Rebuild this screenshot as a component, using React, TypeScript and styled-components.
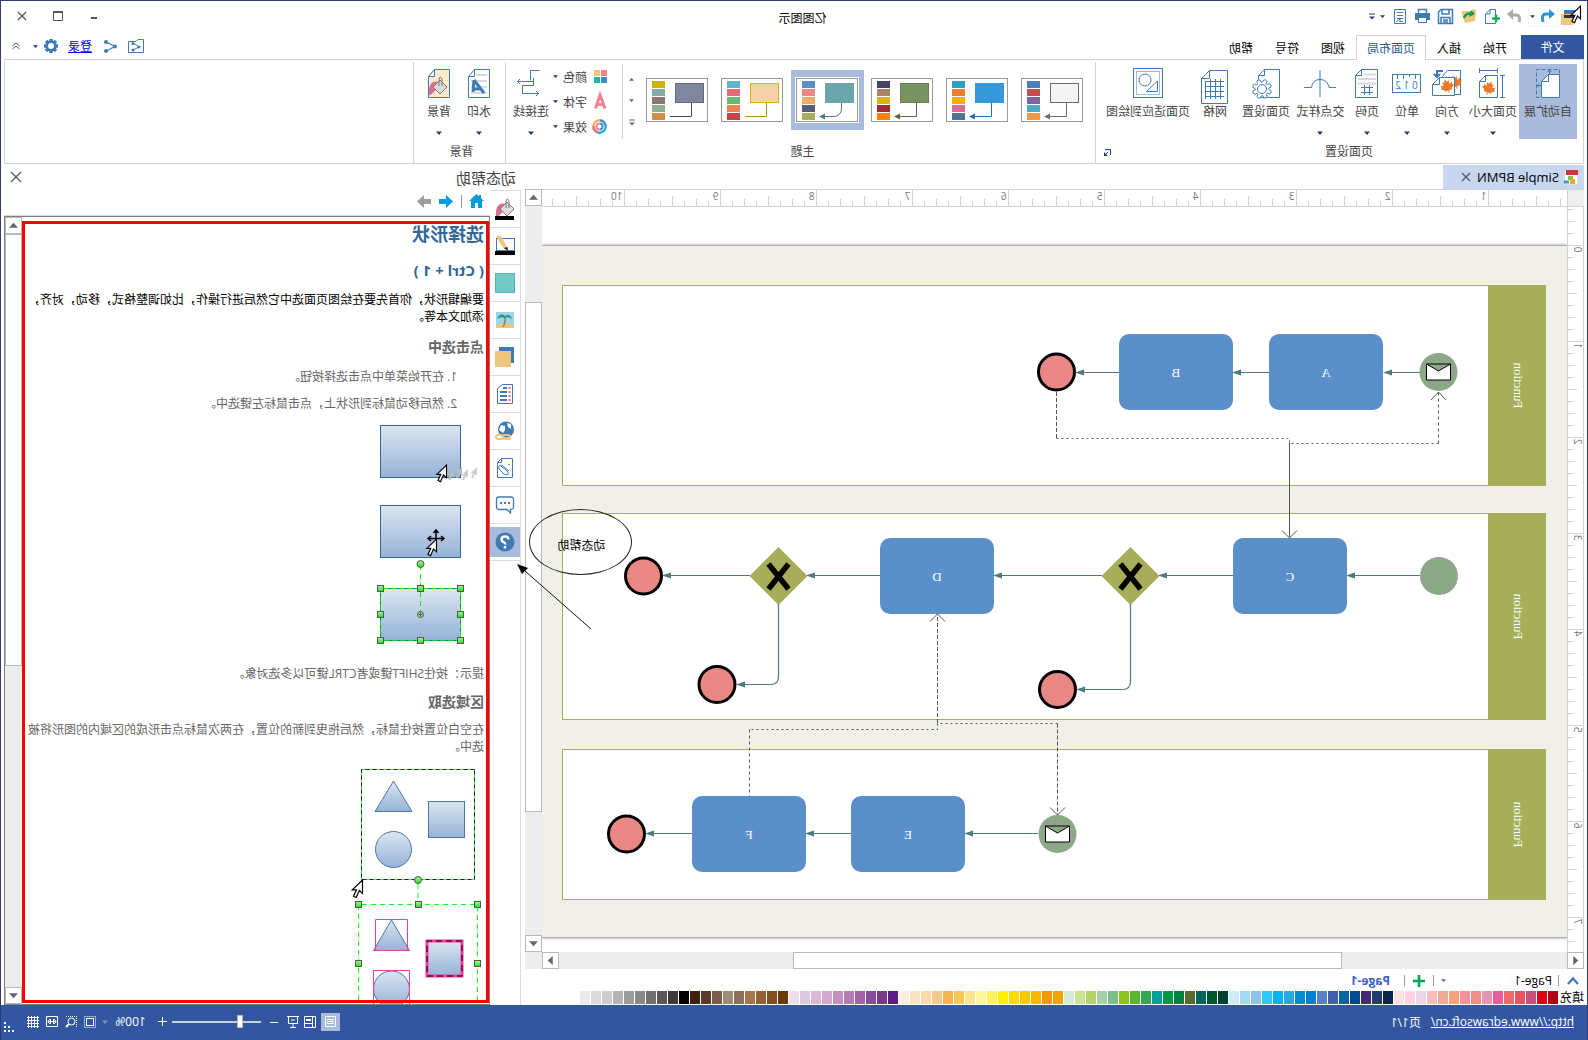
import React, { useState } from "react";
import styled, { createGlobalStyle } from "styled-components";

const BLUE = "#3f7ab5";
const NAVY = "#27407a";
const BAR = "#3257a0";
const HIGHLIGHT = "#a9bbdc";
const LINE = "#d2d2d2";
const OLIVE = "#a8ad5a";
const LINK = "#4d7a7e";
const SANS = '"Open Sans", "Noto Sans CJK SC", sans-serif';
const SERIF = '"Liberation Serif", "Noto Sans CJK SC", serif';

const GlobalStyle = createGlobalStyle`
  *, *::before, *::after { box-sizing: border-box; }
  body { margin: 0; background: #fff; font-family: ${SANS}; font-size: 12px; color: #444; overflow: hidden; }
  button, select, input { font: inherit; color: inherit; margin: 0; padding: 0; border: 0; background: none; }
  h1, h2, h3, p, ol { margin: 0; padding: 0; }
  svg { display: block; flex: none; overflow: visible; }
`;

/* The whole window is shown as a mirror image. */
const Window = styled.div`
  transform: scaleX(-1);
  display: flex;
  flex-direction: column;
  height: 100vh;
  overflow: hidden;
  background: #fff;
  border: 1px solid ${NAVY};
  border-bottom: 0;
`;

const TitleBar = styled.header`
  display: grid;
  grid-template-columns: 1fr auto 1fr;
  align-items: center;
  height: 34px;
  padding: 0 9px 4px 6px;
`;
const QuickBar = styled.div`
  display: flex;
  align-items: center;
  gap: 3px;
`;
const IconButton = styled.button<{ $w?: number; $h?: number }>`
  display: flex;
  align-items: center;
  justify-content: center;
  flex: none;
  width: ${(p) => p.$w ?? 20}px;
  height: ${(p) => p.$h ?? 20}px;
`;
const RedoBox = styled.div`
  display: flex;
  border: 1px solid #f4f4f4;
  width: 30px;
`;
const WindowTitle = styled.div`
  padding: 5px 14px 0 0;
  line-height: 18px;
  color: #000;
`;
const WindowButtons = styled.div`
  display: flex;
  justify-content: flex-end;
  gap: 12px;
`;

const TabRow = styled.nav`
  display: flex;
  height: 24px;
  padding: 0 3px;
`;
const FileTab = styled.button`
  width: 63px;
  margin-right: 3px;
  background: ${BAR};
  color: #fff;
`;
const Tab = styled.button<{ $active?: boolean }>`
  padding: 0 10px;
  border: 1px solid ${(p) => (p.$active ? LINE : "transparent")};
  border-bottom: 0;
  background: #fff;
  color: ${(p) => (p.$active ? "#2b5797" : "#000")};
  height: ${(p) => (p.$active ? 25 : 24)}px;
  position: relative;
`;
const TabTools = styled.div`
  display: flex;
  align-items: center;
  gap: 10px;
  margin-left: auto;
  padding: 0 5px 2px 0;
`;
const SettingsGroup = styled.div`
  display: flex;
  align-items: center;
  gap: 5px;
`;
const Login = styled.a`
  color: #0000ff;
`;

const Ribbon = styled.section`
  display: flex;
  height: 105px;
  flex: none;
  margin: 0 3px;
  border: 1px solid ${LINE};
`;
const Group = styled.div<{ $end: number }>`
  display: flex;
  flex-direction: column;
  margin-top: 2px;
  border-right: 1px solid ${LINE};
  & > :first-child { padding: 2px ${(p) => p.$end}px 0 6px; }
`;
const GroupBody = styled.div`
  display: flex;
  height: 77px;
`;
const GroupFoot = styled.div`
  display: flex;
  align-items: center;
  line-height: 18px;
  padding: 4px 4px 0 0;
`;
const GroupName = styled.span`
  flex: 1;
  text-align: center;
`;
const Big = styled.button<{ $w: number; $on?: boolean }>`
  display: flex;
  flex-direction: column;
  align-items: center;
  width: ${(p) => p.$w}px;
  height: 75px;
  padding-top: 4px;
  white-space: nowrap;
  background: ${(p) => (p.$on ? HIGHLIGHT : "none")};
`;
const BigIcon = styled.span`
  display: block;
  height: 30px;
`;
const BigLabel = styled.span`
  margin: 5px 0 9px;
  line-height: 18px;
`;
const Gallery = styled.div`
  display: flex;
  align-items: center;
  gap: 2px;
  height: 72px;
`;
const ThemeButton = styled.button<{ $on?: boolean }>`
  display: flex;
  align-items: center;
  justify-content: center;
  width: 73px;
  height: 60px;
  background: ${(p) => (p.$on ? HIGHLIGHT : "none")};
`;
const GalleryScroll = styled.div`
  display: flex;
  flex-direction: column;
  align-items: center;
  justify-content: space-between;
  width: 19px;
  height: 75px;
  padding: 7px 0 9px;
  border-right: 1px solid ${LINE};
`;
const Stack = styled.div`
  display: flex;
  flex-direction: column;
  margin-left: 15px;
`;
const SmallButton = styled.button`
  display: flex;
  align-items: center;
  gap: 5px;
  height: 25px;
`;

const Body = styled.main`
  display: flex;
  flex: 1;
  min-height: 0;
  padding: 0 3px;
`;
const Workspace = styled.section`
  position: relative;
  display: flex;
  flex-direction: column;
  flex: 1;
  min-width: 0;
`;
const DocTabs = styled.div`
  display: flex;
  height: 25px;
  padding-top: 1px;
`;
const DocTab = styled.div`
  display: flex;
  align-items: center;
  width: 141px;
  padding-left: 6px;
  background: #c7d7f0;
  color: #000;
  font-size: 13px;
`;
const DocName = styled.span`
  padding: 0 4px;
`;
const Sheet = styled.div`
  display: grid;
  grid-template-columns: 17px 1fr 17px;
  grid-template-rows: 18px 1fr 17px;
  flex: 1;
  min-height: 0;
`;
const Corner = styled.div`
  background: #eee;
  border: solid ${LINE};
  border-width: 1px 1px 1px 0;
`;
const HRuler = styled.div`
  overflow: hidden;
  border: solid ${LINE};
  border-width: 1px 0;
`;
const VRuler = styled.div`
  overflow: hidden;
  border: solid ${LINE};
  border-width: 0 1px;
`;
const Canvas = styled.div`
  position: relative;
  display: flex;
  padding: 38px 0 14px;
  overflow: hidden;
`;
const Paper = styled.div`
  flex: 1;
  background: #f0f0e8;
  border: solid #adadad;
  border-width: 1px 0;
  box-shadow: 0 0 3px #999;
`;
const Drawing = styled.svg`
  position: absolute;
  inset: 0;
  width: 100%;
  height: 100%;
`;
const ScrollBar = styled.div<{ $row?: boolean }>`
  display: flex;
  flex-direction: ${(p) => (p.$row ? "row" : "column")};
  background: #ededed;
`;
const VScroll = styled(ScrollBar)`
  grid-column: 3;
  grid-row: 1 / 3;
`;
const HScroll = styled(ScrollBar)`
  grid-column: 1 / 3;
`;
const ScrollCorner = styled.div`
  background: #ededed;
`;
const ScrollButton = styled.button`
  display: flex;
  align-items: center;
  justify-content: center;
  flex: none;
  width: 17px;
  height: 17px;
  background: #fff;
  border: 1px solid #b9b9b9;
`;
const ScrollGap = styled.div<{ $grow: number }>`
  flex: ${(p) => p.$grow} 1 0;
`;
const ScrollThumb = styled.div<{ $grow: number }>`
  flex: ${(p) => p.$grow} 1 0;
  background: #fff;
  border: 1px solid #b9b9b9;
`;
const PageTabs = styled.div`
  display: flex;
  align-items: center;
  height: 21px;
  padding-top: 2px;
  color: #000;
`;
const PageSelect = styled.select`
  appearance: none;
  width: 108px;
  padding-left: 2px;
  line-height: 16px;
`;
const Rule = styled.i<{ $h?: number; $m?: string }>`
  width: 1px;
  height: ${(p) => p.$h ?? 11}px;
  margin: ${(p) => p.$m ?? "0"};
  background: #999;
`;
const CurrentPage = styled.button`
  color: #3c62c4;
  font-weight: 700;
`;
const FillRow = styled.div`
  display: flex;
  align-items: center;
  height: 15px;
  color: #000;
  line-height: 15px;
`;
const Swatches = styled.div`
  display: flex;
  gap: 1px;
  margin-left: 2px;
`;
const Swatch = styled.button<{ $c: string }>`
  width: 10px;
  height: 13px;
  background: ${(p) => p.$c};
`;
const Callout = styled.div`
  position: absolute;
  right: 4px;
  top: 345px;
  width: 103px;
  height: 66px;
  padding-right: 2px;
  border: 1px solid #222;
  border-radius: 50%;
  text-align: center;
  line-height: 71px;
  color: #000;
`;
const CalloutArrow = styled.svg`
  position: absolute;
  right: -8px;
  top: 400px;
`;

const Dock = styled.aside`
  display: flex;
  flex-direction: column;
  flex: none;
  width: 521px;
`;
const DockHead = styled.div`
  display: flex;
  align-items: center;
  justify-content: space-between;
  height: 26px;
  padding: 0 4px 0 9px;
  font-size: 15px;
`;
const DockBody = styled.div`
  display: flex;
  flex: 1;
  min-height: 0;
`;
const Strip = styled.div`
  width: 31px;
  margin-left: 4px;
  border-left: 1px solid #dcdcdc;
  border-top: 1px solid #dcdcdc;
`;
const StripCell = styled.div`
  display: flex;
  align-items: center;
  height: 37px;
  border-bottom: 1px solid #dcdcdc;
`;
const StripButton = styled.button<{ $on?: boolean }>`
  display: flex;
  align-items: center;
  justify-content: center;
  width: 30px;
  height: 30px;
  background: ${(p) => (p.$on ? HIGHLIGHT : "none")};
`;
const HelpPane = styled.div`
  display: flex;
  flex-direction: column;
  flex: 1;
  min-width: 0;
`;
const HelpNav = styled.div`
  display: flex;
  align-items: center;
  gap: 7px;
  height: 26px;
  padding: 0 0 3px 6px;
  border-bottom: 1px solid #dcdcdc;
`;
const HelpFrame = styled.div`
  display: flex;
  flex: 1;
  min-height: 0;
  border: 1px solid #808080;
`;
const HelpDoc = styled.article`
  position: relative;
  flex: 1;
  padding: 5px 2px 0 5px;
  overflow: hidden;
  line-height: 17px;
  color: #666;
`;
const Mark = styled.div`
  position: absolute;
  inset: 4px 0 1px 0;
  border: 3px solid #f00;
`;
const H1 = styled.h1`
  font-size: 18px;
  line-height: 24px;
  color: #336699;
`;
const H2 = styled.h2`
  margin-top: 14px;
  font-size: 15px;
  line-height: 20px;
  color: #336699;
`;
const H3 = styled.h3`
  margin-top: 10px;
  font-size: 14px;
  line-height: 20px;
`;
const Lead = styled.p`
  margin-top: 11px;
  padding-bottom: 2px;
  color: #000;
`;
const Para = styled.p`
  margin-top: 9px;
`;
const Steps = styled.ol`
  display: grid;
  gap: 10px;
  margin-top: 11px;
  padding-left: 40px;
`;

const Status = styled.footer`
  display: flex;
  align-items: center;
  height: 35px;
  flex: none;
  padding: 0 3px 2px 13px;
  background: ${BAR};
  color: #fff;
`;
const SiteLink = styled.a`
  margin-right: 10px;
  color: #fff;
`;
const StatusTools = styled.div`
  display: flex;
  align-items: center;
  gap: 5px;
  margin-left: auto;
`;
const ViewButton = styled(IconButton)<{ $on?: boolean }>`
  background: ${(p) => (p.$on ? HIGHLIGHT : "none")};
`;
const Zoom = styled.input`
  appearance: none;
  width: 89px;
  height: 14px;
  &::-webkit-slider-runnable-track { height: 2px; background: #c9cfdb; }
  &::-webkit-slider-thumb { appearance: none; width: 6px; height: 13px; margin-top: -6px; background: #fff; border: 1px solid #bbb; }
`;
const Percent = styled.span`
  width: 40px;
  padding-left: 5px;
  text-align: center;
`;
const Grip = styled.span`
  align-self: flex-end;
  margin-left: 7px;
`;

/* ---------- small glyphs ---------- */

const Caret = ({ c = "#1f3a78", s = 6, dir = "down" }: { c?: string; s?: number; dir?: "up" | "down" | "left" | "right" }) => {
  const turn = { down: 0, left: 90, up: 180, right: 270 }[dir];
  return (
    <svg width={s} height={s} viewBox="0 0 8 8">
      <path d="M0 2H8L4 6.500Z" fill={c} transform={`rotate(${turn} 4 4)`} />
    </svg>
  );
};

const Ic = ({ w, h, children, c = BLUE, sw = 1 }: { w: number; h: number; children: React.ReactNode; c?: string; sw?: number }) => (
  <svg width={w} height={h} viewBox={`0 0 ${w} ${h}`} fill="none" stroke={c} strokeWidth={sw}>
    {children}
  </svg>
);

const Cross = ({ s = 8 }: { s?: number }) => (
  <Ic w={s} h={s} c="#555" sw={1.3}>
    <path d={`M0 0L${s} ${s}M${s} 0L0 ${s}`} />
  </Ic>
);

const Cursor = ({ x, y, fill = "#fff", stroke = "#000", k = 1 }: { x: number; y: number; fill?: string; stroke?: string; k?: number }) => (
  <path transform={`translate(${x} ${y}) scale(${k})`} d="M0 0V13.500L3.200 10.600 6.300 17.500 9 16.200 6 9.800H10.200Z" fill={fill} stroke={stroke} strokeWidth={1.2} />
);

const Leaf = ({ x, y, turn = 0, k = 1 }: { x: number; y: number; turn?: number; k?: number }) => (
  <path
    transform={`translate(${x} ${y}) rotate(${turn} 7 7) scale(${k})`}
    fill="#e87a28"
    stroke="none"
    d="M7 0L8.500 3 10.500 2 10 6 13 4.500 12.500 7 14 8 10.500 10.500 11 12 7.500 11.500V14H6.500V11.500L3 12 3.500 10.500 0 8 1.500 7 1 4.500 4 6 3.500 2 5.500 3Z"
  />
);

const Bucket = () => (
  <g>
    <path d="M10 5C16 3 20 8 19 18C15 18 14 13 10 12Z" fill="#dd6e93" stroke="none" />
    <path d="M1 10L8 3 15 10 8 17Z" fill="#dcdcdc" stroke="#777" />
    <path d="M6 9V2Q8 -2 9 2V9" stroke="#777" />
  </g>
);

const Gear = ({ r, cx, cy, hole }: { r: number; cx: number; cy: number; hole?: string }) => (
  <g stroke="none" fill={BLUE}>
    {[0, 45, 90, 135].map((a) => (
      <rect key={a} x={cx - r * 0.25} y={cy - r} width={r * 0.5} height={r * 2} transform={`rotate(${a} ${cx} ${cy})`} />
    ))}
    <circle cx={cx} cy={cy} r={r * 0.78} />
    <circle cx={cx} cy={cy} r={r * 0.42} fill={hole ?? "#fff"} />
  </g>
);

const scallop = (cx: number, cy: number, r: number) => {
  let d = "";
  for (let i = 0; i < 8; i++) {
    const a = (i * Math.PI) / 4 + 0.2;
    const b = a + 0.42;
    const c = a + Math.PI / 4;
    const p = (t: number, q: number) => `${(cx + q * Math.cos(t)).toFixed(1)} ${(cy + q * Math.sin(t)).toFixed(1)}`;
    d += `${i ? "L" : "M"}${p(a, r)}Q${p((a + b) / 2, r + 2)} ${p(b, r)}L${p(b + 0.08, r - 2)}Q${p((b + c) / 2, r - 3)} ${p(c - 0.06, r - 2)}`;
  }
  return d + "Z";
};

/* ---------- ribbon icons ---------- */

const AutoExtend = () => (
  <Ic w={24} h={30}>
    <path d="M.5 6.500H11.500L18.500 13.500V29.500H.5Z" fill="#fff" />
    <path d="M11.500 6.500V13.500H18.500" />
    <path d="M.5 5.500V1.500H23.500V29.500H18.500" strokeDasharray="4 2" />
    <path d="M10.500 6V2M8.500 4L10.500 2 12.500 4M18.500 17.500H23M21 15.500L23 17.500 21 19.500" />
  </Ic>
);
const PageSize = () => (
  <Ic w={27} h={30}>
    <path d="M8.500 2.500H26.500M8.500 0V5M26.500 0V5M3.500 8V29M1 7.500H6M1 29.500H6" />
    <path d="M8.500 7.500H20.500L26.500 13.500V29.500H8.500ZM20.500 7.500V13.500H26.500" />
    <Leaf x={10} y={13} turn={-20} />
  </Ic>
);
const Orientation = () => (
  <Ic w={29} h={30}>
    <path d="M.5 2.500H13.500L18.500 8.500V26.500H.5Z" fill="#fff" />
    <Leaf x={-1} y={7} turn={20} />
    <path d="M6.500 9.500H21.500L28.500 16.500V27.500H6.500ZM21.500 9.500V16.500H28.500" fill="#fff" />
    <Leaf x={7} y={11} turn={20} />
    <path d="M18 3H24V8M21 6L24 9 27 6" strokeWidth={2} />
  </Ic>
);
const Units = () => (
  <Ic w={29} h={30}>
    <rect x={0.5} y={6.500} width={28} height={18} />
    <path d="M5.500 7V11M11.500 7V9M17.500 7V11M23.500 7V11" />
    <text x={14.500} y={21} fontSize={10} fontFamily={SANS} textAnchor="middle" fill={BLUE} stroke="none">0 1 2</text>
  </Ic>
);
const PageNumber = () => (
  <Ic w={23} h={30}>
    <path d="M.5 1.500H16.500L22.500 7.500V29.500H.5ZM16.500 1.500V7.500H22.500" />
    <path d="M2 6.500H14M2 11H20M2 15.500H20" stroke="#d8d8d8" strokeWidth={2} />
    <path d="M8.500 17V27M13.500 17V27M5 19.500H17M5 24.500H17" />
  </Ic>
);
const JumpStyle = () => (
  <Ic w={32} h={30}>
    <path d="M0 19.500H7Q8.500 11.500 16 11.500T24.500 19.500H32M16 2V29" />
  </Ic>
);
const PageSetup = () => (
  <Ic w={28} h={30}>
    <path d="M.5 1.500H15.500L21.500 7.500V29.500H.5ZM15.500 1.500V7.500H21.500" />
    <path d={scallop(18, 21, 9)} fill="#fff" />
    <circle cx={18} cy={21} r={4.500} fill="#fff" />
  </Ic>
);
const GridPage = () => (
  <Ic w={27} h={34}>
    <path d="M.5 2.500H18.500L26.500 10.500V35.500H.5ZM18.500 2.500V10.500H26.500" />
    <path d="M7.500 11V31M12.500 11V31M17.500 11V31M22.500 14V31M4 13.500H23M4 18.500H23M4 23.500H23M4 28.500H23" />
  </Ic>
);
const FitDrawing = () => (
  <Ic w={30} h={30}>
    <rect x={0.5} y={0.5} width={29} height={29} />
    <rect x={3.500} y={3.500} width={23} height={23} strokeDasharray="1 1" />
    <circle cx={18} cy={12} r={6} />
    <path d="M5.500 13V23.500H16.500Z" fill="#fff" />
  </Ic>
);
const Connector = () => (
  <Ic w={27} h={30}>
    <path d="M4.500 2.500H13.500V12.500M10.500 10V13.500H26.500M24 11L26.500 13.500 24 16" />
    <path d="M10.500 13V17.500H21.500V25.500H5.500M8 23L5.500 25.500 8 28" />
  </Ic>
);
const Watermark = () => (
  <Ic w={22} h={30}>
    <path d="M.5 1.500H15.500L21.500 8.500V29.500H.5ZM15.500 1.500V8.500H21.500" />
    <path d="M3 7H14M3 13H19M3 19H19M3 25H19" stroke="#d8d8d8" strokeWidth={2} />
    <path d="M16 12L6 25M16 12L17 24M9 21H17" strokeWidth={3} />
  </Ic>
);
const Backdrop = () => (
  <Ic w={22} h={30}>
    <path d="M.5 1.500H15.500L21.500 8.500V29.500H.5Z" fill="#ffe9cf" />
    <path d="M15.500 1.500V8.500H21.500Z" fill="#fff" />
    <g transform="translate(2 9)"><Bucket /></g>
  </Ic>
);

/* ---------- data ---------- */

const RIBBON_PAGE: { label: string; w: number; icon: React.ReactNode; on?: boolean; caret?: boolean }[] = [
  { label: "自动扩展", w: 58, icon: <AutoExtend />, on: true },
  { label: "页面大小", w: 52, icon: <PageSize />, caret: true },
  { label: "方向", w: 40, icon: <Orientation />, caret: true },
  { label: "单位", w: 40, icon: <Units />, caret: true },
  { label: "页码", w: 40, icon: <PageNumber />, caret: true },
  { label: "交点样式", w: 53, icon: <JumpStyle />, caret: true },
  { label: "页面设置", w: 56, icon: <PageSetup /> },
  { label: "网格", w: 46, icon: <GridPage /> },
  { label: "页面适应到绘图", w: 88, icon: <FitDrawing /> },
];

const THEMES = [
  { fill: "#f4f4f4", edge: "#6b6b6b", line: "#6b6b6b", arrow: true, set: ["#4c7fbe", "#c0504d", "#8064a2", "#4bacc6", "#f79646"] },
  { fill: "#3498db", edge: "#3498db", line: "#2471a8", arrow: true, set: ["#2ba2c4", "#f07c32", "#ffaf00", "#de6c96", "#4f7298"] },
  { fill: "#789262", edge: "#668050", line: "#566d43", arrow: true, set: ["#494369", "#a98467", "#dab50f", "#9e2a34", "#ff8000"] },
  { fill: "#6ba4aa", edge: "#6ba4aa", line: LINK, arrow: true, on: true, round: true, set: ["#5b8fc9", "#eb8784", "#f6ab63", "#535d76", OLIVE] },
  { fill: "#f6d2ab", edge: "#efac00", line: "#b88a14", arrow: false, set: ["#5fb4cc", "#e66a7d", "#6ab86e", "#e88551", "#c74543"] },
  { fill: "#80869c", edge: "#626a87", line: "#454a68", arrow: false, set: ["#ccb400", "#86aaaa", "#8b7870", "#8fb090", "#cf8f48"] },
];

const FILLS = (
  "b30615 da0618 c8507c e95260 ec6a6e e85b9c e297b4 ef8f87 f3919a ffa07a eeac97 f7bdbb ecd5e8 ffd3e2 ffdfe3 " +
  "0f2350 233a72 42297a 044a8f 0367a6 3f5fae 5482c4 0080cf 0090d0 2ca6e0 00b5f1 2dc8f6 8cc3ea a2daee cfebf7 " +
  "00422f 005830 00665c 586b2c 008141 009944 00a29a 2fa852 5bb531 8fc31f 7fbe8b a5d0a8 b3d465 cce198 d5ead8 " +
  "f5a100 f39800 fbb800 fcc800 ffd900 fff000 fff45c fff799 f8e58c fac559 f8b551 f5c98a fad9a8 fce2c4 fdeedd " +
  "601986 7a3a8a 8a4b9c a564a8 b57cb4 c490bf d3a9cd ddb8d5 e1c6e0 eedcec " +
  "6a3906 7f4f21 956134 a6764a 8a6f5c a08a78 7d5b4a 5a3a2a 42210b " +
  "000000 3e3a39 595757 727171 888a88 9c9e9d b2b5b4 cccecd dadada ebebeb"
).split(" ").map((c) => `#${c}`);

/* ---------- parts ---------- */

const ThemeThumb = ({ t }: { t: (typeof THEMES)[number] }) => (
  <svg width={64} height={46} viewBox="0 0 64 46" fill="none">
    <rect width={64} height={46} fill="#fff" />
    <rect x={1.500} y={1.500} width={61} height={43} stroke="#999" />
    <rect x={5.500} y={6.500} width={28} height={19} fill={t.fill} stroke={t.edge} />
    <path d={t.round ? "M17.500 26V31Q17.500 39.500 26 39.500H36" : "M17.500 26V39.500H39"} stroke={t.line} />
    {t.arrow && <path d="M34 36.500L40 39.500 34 42.500Z" fill={t.line} />}
    {t.set.map((c, i) => (
      <rect key={c} x={44} y={4 + i * 8} width={13} height={7} fill={c} />
    ))}
  </svg>
);

const HorizontalRuler = () => (
  <svg width="100%" height="16">
    {Array.from({ length: 85 }, (_, i) => i + 2).map((i) => {
      const x = i * 12 - 17.5;
      const len = i % 8 === 0 ? 16 : i % 8 === 4 ? 10 : i % 2 === 0 ? 7 : 5;
      return (
        <g key={i}>
          <path d={`M${x} ${16 - len}V16`} stroke={LINE} />
          {i % 8 === 0 && <text x={x + 2} y={10} fontSize={10} fill="#777">{i / 8}</text>}
        </g>
      );
    })}
  </svg>
);

const VerticalRuler = () => (
  <svg width="15" height="100%">
    {Array.from({ length: 62 }, (_, k) => k - 3).map((i) => {
      const y = i * 12 + 38.5;
      const len = i % 8 === 0 ? 15 : i % 8 === 4 ? 9 : i % 2 === 0 ? 7 : 5;
      return (
        <g key={i}>
          <path d={`M${15 - len} ${y}H15`} stroke={LINE} />
          {i % 8 === 0 && i >= 0 && <text transform={`translate(9 ${y + 7}) rotate(-90)`} fontSize={10} fill="#777">{i / 8}</text>}
        </g>
      );
    })}
  </svg>
);

const Lane = ({ y, h }: { y: number; h: number }) => (
  <g>
    <rect x={42.500} y={y + 0.5} width={983} height={h - 1} fill="#fff" stroke={OLIVE} />
    <rect x={42} y={y} width={58} height={h} fill={OLIVE} />
    <text transform={`translate(74 ${y + h / 2}) rotate(-90)`} textAnchor="middle" fontSize={13} fill="#fff">Function</text>
  </g>
);
const Task = ({ x, y, name }: { x: number; y: number; name: string }) => (
  <g>
    <rect x={x} y={y} width={114} height={76} rx={10} fill="#5b8fc9" />
    <text x={x + 57} y={y + 43} textAnchor="middle" fontSize={13} fill="#fff">{name}</text>
  </g>
);
const Start = ({ x, y, mail }: { x: number; y: number; mail?: boolean }) => (
  <g>
    <circle cx={x} cy={y} r={19} fill="#8ca888" />
    {mail && <path d={`M${x - 12} ${y - 8}h24v16h-24zl12 7 12 -7`} fill="#fff" stroke="#000" />}
  </g>
);
const End = ({ x, y }: { x: number; y: number }) => <circle cx={x} cy={y} r={18} fill="#e98784" stroke="#000" strokeWidth={3} />;
const Gateway = ({ x, y }: { x: number; y: number }) => (
  <g>
    <path d={`M${x - 29} ${y}L${x} ${y - 29}L${x + 29} ${y}L${x} ${y + 29}Z`} fill={OLIVE} />
    <path d={`M${x - 10} ${y - 12}L${x + 10} ${y + 13}M${x + 10} ${y - 12}L${x - 10} ${y + 13}`} stroke="#000" strokeWidth={5.5} />
  </g>
);
const Flow = ({ d, x, y }: { d: string; x: number; y: number }) => (
  <g>
    <path d={`${d}H${x - 4}`} fill="none" stroke={LINK} strokeWidth={1.2} />
    <path d={`M${x} ${y}l-9 -3v6z`} fill={LINK} />
  </g>
);

const Diagram = () => (
  <Drawing fontFamily={SERIF} role="img" aria-label="Simple BPMN">
    <g transform="translate(-21 -207)">
      <Lane y={285} h={201} />
      <Lane y={513} h={207} />
      <Lane y={749} h={151} />
      <g fill="none" stroke="#555">
        <path d="M531.500 392V438.500" strokeDasharray="4 2" />
        <path d="M531.500 438.500H298.500V443.500H149.500" strokeDasharray="2 3" />
        <path d="M149.500 443.500V392" strokeDasharray="3 3" />
        <path d="M298.500 443V537M291 530.500L298.500 538 306 530.500M142 400L149.500 392 157 400" />
        <path d="M650.500 723V614M530.500 723.500V815" strokeDasharray="4 2" />
        <path d="M530.500 723.500H650.500V729.500H838.500" strokeDasharray="2 3" />
        <path d="M838.500 729.500V796" strokeDasharray="3 3" />
        <path d="M643 621.500L650.500 614 658 621.500M523 807.500L530.500 815 538 807.500" />
      </g>
      <Start x={149.500} y={372} mail />
      <Task x={205} y={334} name="A" />
      <Task x={355} y={334} name="B" />
      <End x={531.500} y={372} />
      <Flow d="M168 372.500" x={205} y={372.500} />
      <Flow d="M319 372.500" x={356} y={372.500} />
      <Flow d="M469 372.500" x={513} y={372.500} />

      <Start x={149} y={576} />
      <Task x={241} y={538} name="C" />
      <Gateway x={457.500} y={576} />
      <Task x={594} y={538} name="D" />
      <Gateway x={809.500} y={576} />
      <End x={944.500} y={576} />
      <End x={530.500} y={689.500} />
      <End x={871} y={684.500} />
      <Flow d="M168 575.500" x={242} y={575.500} />
      <Flow d="M355 575.500" x={430} y={575.500} />
      <Flow d="M486 575.500" x={595} y={575.500} />
      <Flow d="M708 575.500" x={782} y={575.500} />
      <Flow d="M838 575.500" x={926} y={575.500} />
      <Flow d="M457.500 604V681.500Q457.500 689.500 465.500 689.500" x={512} y={689.500} />
      <Flow d="M809.500 604V676.500Q809.500 684.500 817.500 684.500" x={852} y={684.500} />

      <Start x={530.500} y={834} mail />
      <Task x={623} y={796} name="E" />
      <Task x={782} y={796} name="F" />
      <End x={961.500} y={834} />
      <Flow d="M550 833.500" x={624} y={833.500} />
      <Flow d="M737 833.500" x={783} y={833.500} />
      <Flow d="M896 833.500" x={943} y={833.500} />
    </g>
  </Drawing>
);

const Handle = ({ x, y }: { x: number; y: number }) => <rect x={x - 3} y={y - 3} width={6} height={6} fill="url(#knob)" stroke="#555" />;
const Shade = () => (
  <defs>
    <linearGradient id="shade" x2="0" y2="1">
      <stop offset="0" stopColor="#dbe5f1" />
      <stop offset="1" stopColor="#95b3d7" />
    </linearGradient>
    <linearGradient id="knob" x2="0" y2="1">
      <stop offset="0" stopColor="#9dff8d" />
      <stop offset="1" stopColor="#22dd22" />
    </linearGradient>
  </defs>
);

const ClickFigure = () => (
  <svg width={140} height={253} viewBox="1104 412 140 253" fill="none">
    <Shade />
    {[425.5, 505.5, 588.5].map((y) => (
      <rect key={y} x={1127.500} y={y} width={80} height={52} fill="url(#shade)" stroke="#336699" />
    ))}
    {[1111, 1120, 1126, 1134].map((x, i) => (
      <Cursor key={x} x={x} y={467 + (i % 2 ? 2 : 0)} k={0.65} fill={i > 1 ? "#bbb" : "#ccc"} stroke="none" />
    ))}
    <Cursor x={1141.500} y={465} k={0.95} />
    <path d="M1152 530V547M1144 538.500H1160M1149.500 533L1152 530 1154.500 533M1147 536L1144 538.500 1147 541M1157 536L1160 538.500 1157 541" stroke="#000" strokeWidth={1.5} />
    <Cursor x={1151.500} y={539} k={0.95} />
    <rect x={1127.500} y={588.500} width={80} height={52} stroke="#00f000" strokeDasharray="5 3" />
    <path d="M1167.500 565V614" stroke="#00f000" strokeDasharray="5 4" />
    <circle cx={1167.500} cy={564} r={3.500} fill="url(#knob)" stroke="#555" />
    <circle cx={1167.500} cy={614.500} r={3} fill="#9fd89a" stroke="#555" />
    <path d="M1165.500 614.500H1169.500M1167.500 612.500V616.500" stroke="#555" />
    {[1127.5, 1167.5, 1207.5].flatMap((x) =>
      [588.5, 614.5, 640.5].filter((y) => x !== 1167.5 || y !== 614.5).map((y) => <Handle key={`${x}-${y}`} x={x} y={y} />)
    )}
  </svg>
);

const AreaFigure = () => (
  <svg width={140} height={249} viewBox="1104 755 140 249" fill="none">
    <rect x={1113.500} y={769.500} width={113} height={110} stroke="#3f3" />
    <rect x={1113.500} y={769.500} width={113} height={110} stroke="#222" strokeDasharray="4 3" />
    <g fill="url(#shade)" stroke="#4f76a6">
      <path d="M1194.500 781L1213 811.500H1176Z" />
      <rect x={1123.500} y={801.500} width={36} height={36} />
      <circle cx={1194.500} cy={849.500} r={18} />
      <path d="M1196.500 920L1214.500 950.500H1178.500Z" />
      <circle cx={1196.500} cy={989} r={18} />
      <rect x={1126} y={941} width={35} height={35} stroke="#f8389c" strokeWidth={3} />
    </g>
    <rect x={1126} y={941} width={35} height={35} stroke="#000" strokeDasharray="6 4" />
    <path d="M1180.500 919.500H1212.500V950.500H1180.500ZM1178.500 1010V970.500H1214.500V1010" stroke="#f8389c" />
    <path d="M1110.500 1010V904.500H1229.500V1010M1170 884V904" stroke="#1f1" strokeDasharray="5 4" />
    <circle cx={1170} cy={880} r={3.500} fill="url(#knob)" stroke="#555" />
    <Handle x={1110.500} y={904.500} />
    <Handle x={1169.500} y={904.500} />
    <Handle x={1229.500} y={904.500} />
    <Handle x={1110.500} y={963.500} />
    <Handle x={1229.500} y={963.500} />
    <Cursor x={1225.500} y={880} />
  </svg>
);

const STRIP: { name: string; icon: React.ReactNode; on?: boolean }[] = [
  { name: "填充", icon: <Ic w={20} h={20}><Bucket /><rect x={1} y={17} width={19} height={4} fill="#000" stroke="none" /></Ic> },
  { name: "线条", icon: <Ic w={20} h={20}><rect x={0.5} y={2.500} width={18} height={12} /><path d="M7 13L14 0 19 0 11 13Z" fill="#ecc67c" stroke="none" /><path d="M7 15L7.500 11 11 12Z" fill="#222" stroke="none" /><rect y={15} width={20} height={4} fill="#000" stroke="none" /></Ic> },
  { name: "阴影", icon: <Ic w={20} h={20}><rect x={0.5} y={0.5} width={19} height={19} fill="#73c8c8" stroke="#4fb5b5" /></Ic> },
  { name: "图片", icon: <Ic w={20} h={18}><rect width={18} height={16} x={1} y={1} fill="#9bd5ea" stroke="none" /><path d="M1 14Q9 11 19 14V17H1Z" fill="#ecc67c" stroke="none" /><path d="M11 16Q8 10 9 6L11 6Q10 11 13 16Z" fill="#b5825a" stroke="none" /><path d="M3 8Q5 2 10 5Q15 1 18 8Q13 5 11 7Q7 5 3 8Z" fill="#1e9b82" stroke="none" /></Ic> },
  { name: "图层", icon: <Ic w={20} h={20}><rect x={1} y={0} width={15} height={16} fill={BLUE} stroke="none" /><rect x={4} y={4} width={16} height={16} fill="#ecc67c" stroke="none" /></Ic> },
  { name: "备注", icon: <Ic w={16} h={20}><path d="M.5 .5H10.500L15.500 4.500V19.500H.5Z" /><path d="M6 4H10M6 8H13M6 12H13M6 16H13" strokeWidth={2} /><path d="M2.500 4H4.500M2.500 8H4.500M2.500 12H4.500M2.500 16H4.500" stroke="#e66a7d" strokeWidth={2} /></Ic> },
  { name: "超链接", icon: <Ic w={20} h={20}><circle cx={9} cy={8.500} r={8} fill={BLUE} stroke="none" /><path d="M4 3L8 2 7 6 4 8ZM10 5L14 4 16 9 12 12 10 9Z" fill="#fff" stroke="none" /><g stroke="#ecc67c" strokeWidth={2}><rect x={5} y={14} width={7} height={4} rx={2} /><rect x={12} y={14} width={7} height={4} rx={2} /></g></Ic> },
  { name: "附件", icon: <Ic w={16} h={20}><path d="M.5 .5H11.500L15.500 4.500V19.500H.5ZM11.500 .5V4.500H15.500" /><path d="M3 7L5 6M12 8L6 13Q4 15 5 16.500 7 17.500 9 16L14 11Q15 9 13.500 7.500 12 6.500 10 8L4 13" /></Ic> },
  { name: "批注", icon: <Ic w={18} h={18} sw={1.3}><path d="M3 1H15Q17.500 1 17.500 3V11Q17.500 13.500 15 13.500H7L3.500 17V13.500Q.5 13.500 .5 11V3Q.5 1 3 1Z" /><path d="M4 7H6M8 7H10M12 7H14" strokeWidth={2} /></Ic> },
  {
    name: "动态帮助",
    on: true,
    icon: (
      <Ic w={20} h={20}>
        <circle cx={10} cy={10} r={9.500} fill={BLUE} stroke="none" />
        <path d="M6.500 7.500Q6.500 4.500 10 4.500T13.500 7.500Q13.500 9 11.500 10T10 12.500M10 14V16.500" stroke="#fff" strokeWidth={2.4} />
      </Ic>
    ),
  },
];

export default function App() {
  const [zoom, setZoom] = useState(22);
  return (
    <>
      <GlobalStyle />
      <Window>
        <TitleBar>
          <QuickBar>
            <IconButton aria-label="亿图">
              <Ic w={20} h={20}>
                <rect x={5} y={4} width={12} height={10} fill={BLUE} stroke="none" />
                <path d="M8 8H20V19H8Z" fill="#ecc67c" stroke="none" />
                <path d="M7 10.500H17" stroke="#333" strokeWidth={3} />
                <Cursor x={0.500} y={0} k={0.95} />
              </Ic>
            </IconButton>
            <RedoBox>
              <IconButton aria-label="撤销" $w={19}>
                <Ic w={15} h={14} c="#2b94d8" sw={3}><path d="M4 5H9Q14 5 12 13" /><path d="M0 5L6 0V10Z" fill="#2b94d8" stroke="none" /></Ic>
              </IconButton>
              <IconButton aria-label="更多撤销" $w={10}><Caret s={5} /></IconButton>
            </RedoBox>
            <IconButton aria-label="重做">
              <Ic w={15} h={14} c="#ababab" sw={3}><path d="M11 6H6Q1 6 3 13" /><path d="M15 5L9 0V11Z" fill="#ababab" stroke="none" /></Ic>
            </IconButton>
            <IconButton aria-label="新建">
              <Ic w={16} h={16}><path d="M4.500 1.500H10L14.500 6V15.500H4.500ZM10 1.500V6H14.500" /><path d="M0 10.500H8M4 6.500V14.500" stroke="#0fae60" strokeWidth={2.5} /></Ic>
            </IconButton>
            <IconButton aria-label="打开">
              <Ic w={16} h={16}><path d="M1 2L4 1 6 3 15 3V6L12 15 2 13Z" fill="#ecc67c" stroke="none" /><path d="M13 10Q11 4 5 6" stroke="#0f9d4f" strokeWidth={2.500} /><path d="M2 6L6 2 8 9Z" fill="#0f9d4f" stroke="none" /></Ic>
            </IconButton>
            <IconButton aria-label="保存">
              <Ic w={15} h={15}><path d="M.5 .5H12L14.500 3V14.500H.5Z" strokeWidth={1.500} /><path d="M4 .5V5H11V.5M3 14V8.500H12V14M5 11H10M5 13H10" strokeWidth={1.5} /></Ic>
            </IconButton>
            <IconButton aria-label="打印">
              <Ic w={15} h={14}><path d="M0 4H15V11H0Z" fill={BLUE} stroke="none" /><path d="M3.500 4V.5H11.500V4" strokeWidth={1.5} /><rect x={3.500} y={8.500} width={8} height={5} fill="#fff" /></Ic>
            </IconButton>
            <IconButton aria-label="导出">
              <Ic w={12} h={15}><path d="M.5 .5H11.500V14.500H.5Z" /><path d="M3 3.500H9M3 6.500H9M3 9.500H9M3 12.500H6M10 13L6 10M6 13V9.500H9" /></Ic>
            </IconButton>
            <IconButton aria-label="更多" $w={8}><Caret s={5} /></IconButton>
            <IconButton aria-label="自定义" $w={8}>
              <Ic w={6} h={7}><path d="M0 1H6" stroke={NAVY} /><path d="M0 3.500H6L3 6.500Z" fill={NAVY} stroke="none" /></Ic>
            </IconButton>
          </QuickBar>
          <WindowTitle>亿图图示</WindowTitle>
          <WindowButtons>
            <IconButton aria-label="最小化" $w={24}><Ic w={6} h={6} c="#555" sw={2}><path d="M0 5H6" /></Ic></IconButton>
            <IconButton aria-label="最大化" $w={24}><Ic w={10} h={10} c="#555"><path d="M1 .5H9.500V9.500H.5V.5" /><path d="M0 1H10" strokeWidth={2} /></Ic></IconButton>
            <IconButton aria-label="关闭" $w={24}><Cross /></IconButton>
          </WindowButtons>
        </TitleBar>

        <TabRow>
          <FileTab>文件</FileTab>
          <Tab>开始</Tab>
          <Tab>插入</Tab>
          <Tab $active>页面布局</Tab>
          <Tab>视图</Tab>
          <Tab>符号</Tab>
          <Tab>帮助</Tab>
          <TabTools>
            <IconButton aria-label="共享文件" $w={16}>
              <Ic w={16} h={14}><path d="M.5 13.500V.5H6L8 2.500H15.500V13.500Z" /><path d="M11 4L5 8 11 11" /><g fill={BLUE} stroke="none"><circle cx={11} cy={4.500} r={1.500} /><circle cx={5} cy={8} r={1.500} /><circle cx={11} cy={11} r={1.500} /></g></Ic>
            </IconButton>
            <IconButton aria-label="共享" $w={16}>
              <Ic w={13} h={13}><path d="M11 2L2 6.500 11 11" strokeWidth={1.300} /><g fill={BLUE} stroke="none"><circle cx={11} cy={2} r={2} /><circle cx={2} cy={6.500} r={2} /><circle cx={11} cy={11} r={2} /></g></Ic>
            </IconButton>
            <Login href="#login">登录</Login>
            <SettingsGroup>
              <IconButton aria-label="设置" $w={14}><Ic w={14} h={14}><Gear r={7} cx={7} cy={7} /></Ic></IconButton>
              <IconButton aria-label="更多设置" $w={6} $h={6}><Caret s={5} /></IconButton>
            </SettingsGroup>
            <IconButton aria-label="折叠功能区" $w={14}><Ic w={8} h={8} c="#555"><path d="M.5 4L4 1 7.500 4M.5 7L4 4 7.500 7" /></Ic></IconButton>
          </TabTools>
        </TabRow>

        <Ribbon>
          <Group $end={8}>
            <GroupBody>
              {RIBBON_PAGE.map((b) => (
                <Big key={b.label} $w={b.w} $on={b.on}>
                  <BigIcon>{b.icon}</BigIcon>
                  <BigLabel>{b.label}</BigLabel>
                  {b.caret && <Caret />}
                </Big>
              ))}
            </GroupBody>
            <GroupFoot>
              <GroupName>页面设置</GroupName>
              <IconButton aria-label="页面设置选项" $w={15} $h={8}>
                <Ic w={7} h={7} c={NAVY}><path d="M.5 6V.5H6M3 3L6 6" /><path d="M7 3V7H3Z" fill={NAVY} stroke="none" /></Ic>
              </IconButton>
            </GroupFoot>
          </Group>
          <Group $end={3}>
            <GroupBody>
              <Gallery>
                {THEMES.map((t) => (
                  <ThemeButton key={t.fill} $on={t.on} aria-label="主题"><ThemeThumb t={t} /></ThemeButton>
                ))}
              </Gallery>
              <GalleryScroll>
                <IconButton aria-label="上一行" $w={12} $h={16}><Caret c="#666" s={5} dir="up" /></IconButton>
                <IconButton aria-label="下一行" $w={12} $h={16}><Caret c="#666" s={5} /></IconButton>
                <IconButton aria-label="展开" $w={12} $h={16}><Ic w={6} h={7} c="#666"><path d="M0 1H6" /><path d="M0 3.500H6L3 6.500Z" fill="#666" stroke="none" /></Ic></IconButton>
              </GalleryScroll>
              <Stack>
                <SmallButton>
                  <Ic w={15} h={13}><g stroke="none"><rect width={6} height={6} fill="#ef8490" /><rect x={7} width={6} height={6} fill="#ecc67c" /><rect y={7} width={6} height={6} fill="#3f8fcf" /><rect x={7} y={7} width={6} height={6} fill="#1bb89a" /></g></Ic>
                  颜色<Caret s={5} />
                </SmallButton>
                <SmallButton>
                  <Ic w={15} h={15} c="#ef8490" sw={3}><path d="M2 14.500L7 1L11.500 14.500M4 10.500H10" /></Ic>
                  字体<Caret s={5} />
                </SmallButton>
                <SmallButton>
                  <Ic w={15} h={15} sw={2.5}>
                    <path d="M7.500 1.300A6.200 6.200 0 0 0 1.500 9" stroke="#3f8fcf" /><path d="M1.500 9A6.200 6.200 0 0 0 9 13.500" stroke="#1bb8c4" /><path d="M9 13.500A6.200 6.200 0 0 0 13.500 7" stroke="#e66a7d" /><path d="M13.500 7A6.200 6.200 0 0 0 7.500 1.300" stroke="#ecb05c" />
                    <path d="M7.500 4.500A3 3 0 0 0 7.500 10.500" stroke="#3f8fcf" strokeWidth={2} /><path d="M7.500 10.500A3 3 0 0 0 7.500 4.500" stroke="#ef8490" strokeWidth={2} />
                  </Ic>
                  效果<Caret s={5} />
                </SmallButton>
              </Stack>
              <Big $w={44}>
                <BigIcon><Connector /></BigIcon>
                <BigLabel>连接线</BigLabel>
                <Caret />
              </Big>
            </GroupBody>
            <GroupFoot><GroupName>主题</GroupName></GroupFoot>
          </Group>
          <Group $end={5}>
            <GroupBody>
              <Big $w={40}><BigIcon><Watermark /></BigIcon><BigLabel>水印</BigLabel><Caret /></Big>
              <Big $w={40}><BigIcon><Backdrop /></BigIcon><BigLabel>背景</BigLabel><Caret /></Big>
            </GroupBody>
            <GroupFoot><GroupName>背景</GroupName></GroupFoot>
          </Group>
        </Ribbon>

        <Body>
          <Workspace>
            <DocTabs>
              <DocTab>
                <Ic w={15} h={15}>
                  <rect x={0.500} y={0.500} width={13} height={14} fill="#fff" stroke="#ddd" />
                  <rect x={0} y={0} width={12} height={5} fill="#c8373c" stroke="none" />
                  <rect x={5} y={6} width={5} height={4} fill="#8bc34a" stroke="none" />
                  <rect x={3} y={9} width={5} height={5} fill="#f5a623" stroke="none" />
                  <path d="M9 12H14" stroke="#3498db" strokeWidth={3} />
                </Ic>
                <DocName>Simple BPMN</DocName>
                <IconButton aria-label="关闭文档" $w={14}><Cross /></IconButton>
              </DocTab>
            </DocTabs>
            <Sheet>
              <Corner />
              <HRuler><HorizontalRuler /></HRuler>
              <VScroll>
                <ScrollButton aria-label="向上滚动"><Caret c="#666" s={9} dir="up" /></ScrollButton>
                <ScrollGap $grow={96} />
                <ScrollThumb $grow={510} />
                <ScrollGap $grow={123} />
                <ScrollButton aria-label="向下滚动"><Caret c="#666" s={9} /></ScrollButton>
              </VScroll>
              <VRuler><VerticalRuler /></VRuler>
              <Canvas>
                <Paper />
                <Diagram />
              </Canvas>
              <HScroll $row>
                <ScrollButton aria-label="向左滚动"><Caret c="#666" s={9} dir="left" /></ScrollButton>
                <ScrollGap $grow={225} />
                <ScrollThumb $grow={549} />
                <ScrollGap $grow={234} />
                <ScrollButton aria-label="向右滚动"><Caret c="#666" s={9} dir="right" /></ScrollButton>
              </HScroll>
              <ScrollCorner />
            </Sheet>
            <PageTabs>
              <IconButton aria-label="展开页面" $w={22}><Ic w={12} h={8} sw={2.2}><path d="M1 7L6 1.500 11 7" /></Ic></IconButton>
              <Rule $m="0 4px 0 3px" />
              <PageSelect aria-label="页面"><option>Page-1</option></PageSelect>
              <Caret c="#666" s={5} />
              <Rule $m="0 8px 0 7px" />
              <IconButton aria-label="添加页面" $w={12}><Ic w={12} h={12} c="#00a650" sw={2.6}><path d="M0 6H12M6 0V12" /></Ic></IconButton>
              <Rule $m="0 14px 0 8px" />
              <CurrentPage>Page-1</CurrentPage>
            </PageTabs>
            <FillRow>
              填充
              <Swatches>
                {FILLS.map((c, i) => <Swatch key={i} $c={c} aria-label={c} />)}
              </Swatches>
            </FillRow>
            <Callout>动态帮助</Callout>
            <CalloutArrow width={74} height={66} viewBox="0 0 74 66">
              <path d="M0 65L66 7" stroke="#111" />
              <path d="M74 0L69 10 63 4Z" fill="#000" />
            </CalloutArrow>
          </Workspace>

          <Dock>
            <DockHead>
              动态帮助
              <IconButton aria-label="关闭帮助" $w={16}><Cross s={10} /></IconButton>
            </DockHead>
            <DockBody>
              <Strip>
                {STRIP.map((s) => (
                  <StripCell key={s.name}>
                    <StripButton $on={s.on} aria-label={s.name}>{s.icon}</StripButton>
                  </StripCell>
                ))}
              </Strip>
              <HelpPane>
                <HelpNav>
                  <IconButton aria-label="主页" $w={15}>
                    <Ic w={15} h={14}><path d="M7.500 0L15 7H13V14H9V9H6V14H2V7H0L3 4V1H5V2.500Z" fill="#049be0" stroke="none" /></Ic>
                  </IconButton>
                  <Rule $h={13} />
                  <IconButton aria-label="后退" $w={15}>
                    <Ic w={14} h={13}><path d="M0 6.500L7 0V4H14V9H7V13Z" fill="#049be0" stroke="none" /></Ic>
                  </IconButton>
                  <IconButton aria-label="前进" $w={16}>
                    <Ic w={14} h={13}><path d="M14 6.500L7 0V4H0V9H7V13Z" fill="#9c9c9c" stroke="none" /></Ic>
                  </IconButton>
                </HelpNav>
                <HelpFrame>
                  <HelpDoc>
                    <H1>选择形状</H1>
                    <H2>( Ctrl + 1 )</H2>
                    <Lead>要编辑形状，你首先要在绘图页面选中它然后进行操作，比如调整格式，移动，对齐，添加文本等。</Lead>
                    <H3>点击选中</H3>
                    <Steps>
                      <li>在开始菜单中点击选择按钮。</li>
                      <li>然后移动鼠标到形状上，点击鼠标左键选中。</li>
                    </Steps>
                    <ClickFigure />
                    <p>提示：按住SHIFT键或者CTRL键可以多选对象。</p>
                    <H3>区域选取</H3>
                    <Para>在空白位置按住鼠标，然后拖曳到新的位置，在两次鼠标点击形成的区域内的图形将被选中。</Para>
                    <AreaFigure />
                    <Mark />
                  </HelpDoc>
                  <ScrollBar>
                    <ScrollButton aria-label="帮助向上滚动"><Caret c="#666" s={9} dir="up" /></ScrollButton>
                    <ScrollThumb $grow={431} />
                    <ScrollGap $grow={322} />
                    <ScrollButton aria-label="帮助向下滚动"><Caret c="#666" s={9} /></ScrollButton>
                  </ScrollBar>
                </HelpFrame>
              </HelpPane>
            </DockBody>
          </Dock>
        </Body>

        <Status>
          <SiteLink href="http://www.edrawsoft.cn/">http://www.edrawsoft.cn/</SiteLink>
          <span>页1/1</span>
          <StatusTools>
            <ViewButton $on $w={19} $h={18} aria-label="普通视图"><Ic w={11} h={11} c="#fff"><path d="M.5 .5H10.500V10.500H.5ZM2 3.500H9M2 5.500H9M2 7.500H9" /></Ic></ViewButton>
            <ViewButton $w={12} aria-label="页面视图"><Ic w={12} h={12} c="#fff"><path d="M.5 .5H11.500V11.500H.5ZM3.500 .5V11.500M3.500 7.500H11.500" /><path d="M5 4H10" strokeWidth={2} /></Ic></ViewButton>
            <ViewButton $w={12} aria-label="演示"><Ic w={12} h={12} c="#fff"><path d="M0 .5H12M1.500 1V7.500H10.500V1M4 4H8M6 8V11.500M3 11.500H9" /></Ic></ViewButton>
            <ViewButton $w={16} aria-label="缩小"><Ic w={8} h={8} c="#fff"><path d="M0 4.500H8" /></Ic></ViewButton>
            <Zoom type="range" min={0} max={100} value={zoom} onChange={(e) => setZoom(Number(e.target.value))} aria-label="缩放" />
            <ViewButton $w={9} aria-label="放大"><Ic w={9} h={9} c="#fff"><path d="M0 4.500H9M4.500 0V9" /></Ic></ViewButton>
            <Percent>100%</Percent>
            <Caret c="#8a93a8" s={6} />
            <ViewButton $w={14} aria-label="适应选择"><Ic w={12} h={12} c="#fff"><rect x={0.500} y={0.500} width={11} height={11} strokeDasharray="1 1" /><rect x={2.500} y={2.500} width={7} height={7} /></Ic></ViewButton>
            <ViewButton $w={14} aria-label="缩放区域"><Ic w={12} h={12} c="#fff"><path d="M0 .5H12M.5 0V12" strokeDasharray="1 1" /><circle cx={5.500} cy={5.500} r={3.500} /><path d="M8 8L11 11" strokeWidth={2} /></Ic></ViewButton>
            <ViewButton $w={14} aria-label="适应宽度"><Ic w={12} h={11} c="#fff"><path d="M.5 .5H11.500V10.500H.5ZM2 5.500H10M4 3L2 5.500 4 8M8 3L10 5.500 8 8M4.500 3V8M7.500 3V8" /></Ic></ViewButton>
            <ViewButton $w={14} aria-label="网格"><Ic w={12} h={12} c="#fff"><path d="M1.500 0V12M4.500 0V12M7.500 0V12M10.500 0V12M0 1.500H12M0 4.500H12M0 7.500H12M0 10.500H12" /></Ic></ViewButton>
            <Grip>
              <Ic w={10} h={10}><g fill="#fff" stroke="none"><rect x={8} y={0} width={2} height={2} /><rect x={8} y={4} width={2} height={2} /><rect x={4} y={4} width={2} height={2} /><rect x={8} y={8} width={2} height={2} /><rect x={4} y={8} width={2} height={2} /><rect x={0} y={8} width={2} height={2} /></g></Ic>
            </Grip>
          </StatusTools>
        </Status>
      </Window>
    </>
  );
}
